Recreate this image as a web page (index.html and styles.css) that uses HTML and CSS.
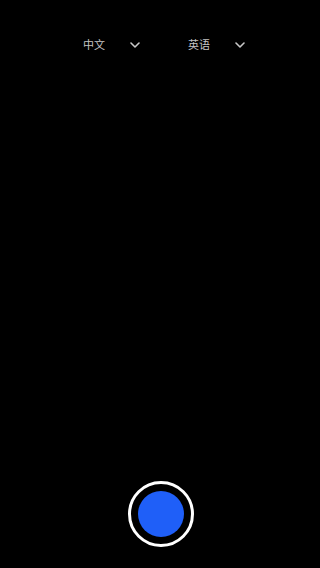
FILE: index.html
```html
<!DOCTYPE html>
<html lang="zh">
<head>
<meta charset="utf-8">
<meta name="viewport" content="width=device-width, initial-scale=1">
<link rel="stylesheet" href="styles.css">
</head>
<body>
<div class="screen">
  <header class="langs">
    <div class="lang">
      <span class="lang-name">中文</span>
      <svg class="chev" width="10" height="6" viewBox="0 0 10 6"><path d="M1 1 L5 5 L9 1" fill="none" stroke="#c8c8c8" stroke-width="1.6" stroke-linecap="round" stroke-linejoin="round"/></svg>
    </div>
    <div class="lang">
      <span class="lang-name">英语</span>
      <svg class="chev" width="10" height="6" viewBox="0 0 10 6"><path d="M1 1 L5 5 L9 1" fill="none" stroke="#c8c8c8" stroke-width="1.6" stroke-linecap="round" stroke-linejoin="round"/></svg>
    </div>
  </header>
  <main class="view"></main>
  <footer class="controls">
    <button class="shutter" aria-label="录音"><span class="shutter-dot"></span></button>
  </footer>
</div>
</body>
</html>
```
FILE: styles.css
```css
html, body {
  margin: 0;
  padding: 0;
  background: #000;
}
.screen {
  width: 320px;
  height: 568px;
  display: flex;
  flex-direction: column;
  background: #000;
  font-family: "Noto Sans CJK SC", "Noto Sans", sans-serif;
}
.langs {
  display: flex;
  padding: 37px 0 0 83px;
  gap: 48px;
}
.lang {
  display: flex;
  align-items: center;
  gap: 25px;
  height: 14px;
}
.lang-name {
  font-size: 11px;
  line-height: 14px;
  color: #c4c4c4;
}
.chev {
  display: block;
  margin-top: 1px;
}
.view {
  flex: 1;
}
.controls {
  display: flex;
  justify-content: center;
  padding: 0 0 21px 1px;
}
.shutter {
  width: 66px;
  height: 66px;
  box-sizing: border-box;
  border: 3px solid #fff;
  border-radius: 50%;
  background: #000;
  padding: 0;
  display: flex;
  align-items: center;
  justify-content: center;
}
.shutter-dot {
  width: 46px;
  height: 46px;
  border-radius: 50%;
  background: #1f5ff8;
}
```
